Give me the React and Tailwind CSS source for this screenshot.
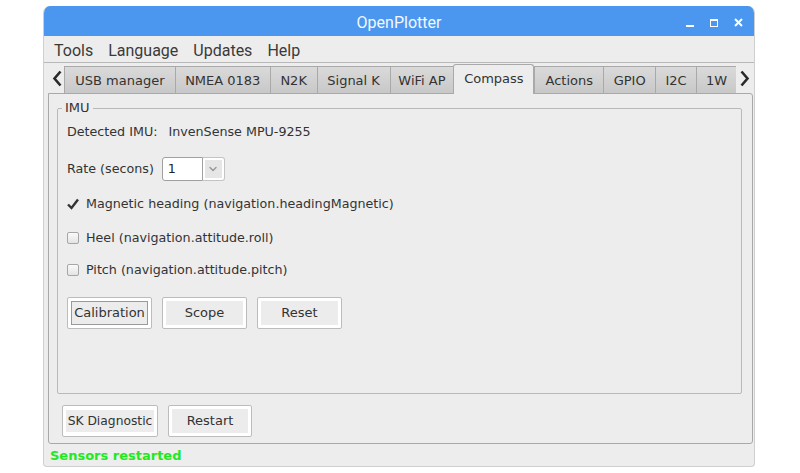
import { ChevronDown } from 'lucide-react'

const TABS = [
  { label: 'USB manager', w: 'w-[111px]' },
  { label: 'NMEA 0183', w: 'w-[95px]' },
  { label: 'N2K', w: 'w-[47px]' },
  { label: 'Signal K', w: 'w-[73px]' },
  { label: 'WiFi AP', w: 'w-[64px]' },
  { label: 'Compass', w: 'w-[81px]', active: true },
  { label: 'Actions', w: 'w-[69px]' },
  { label: 'GPIO', w: 'w-[52px]' },
  { label: 'I2C', w: 'w-[41px]' },
  { label: '1W', w: 'w-[40px]' },
]

function GtkButton({ children, width, focused }) {
  return (
    <div className={`${width} h-[32px] border border-[#bcbcbc] bg-white rounded-[2px] p-[3px] flex`}>
      <div
        className={`flex-1 flex items-center justify-center bg-[#ececec] text-[#333] ${
          focused ? 'border border-[#9a9a9a] outline outline-1 outline-white' : ''
        }`}
      >
        {children}
      </div>
    </div>
  )
}

function CheckRow({ checked, children }) {
  return (
    <div className="flex items-center h-[16px]">
      {checked ? (
        <svg width="12" height="12" viewBox="0 0 12 12" className="mr-[7px]">
          <path d="M1 6.5 L4.5 10 L11 1.5" fill="none" stroke="#333" strokeWidth="2.4" />
        </svg>
      ) : (
        <div className="w-[12px] h-[12px] mr-[7px] rounded-[2px] border border-[#a6a6a6] bg-gradient-to-b from-[#fafafa] to-[#e4e4e4]" />
      )}
      <span>{children}</span>
    </div>
  )
}

export default function App() {
  return (
    <div className="w-[800px] h-[473px] bg-white pt-[6px] pl-[43px] font-['DejaVu_Sans',sans-serif] text-[13px] text-[#333]">
      <div className="w-[712px] h-[461px] flex flex-col bg-[#ededed] rounded-t-[7px] rounded-b-[4px] border-x border-b border-[#cfcfcf] overflow-hidden">
        {/* title bar */}
        <div className="h-[30px] bg-[#4b97ef] relative flex items-center justify-center pt-[3px]">
          <span className="font-['Roboto',sans-serif] text-[16px] text-[#f4f8ff]">OpenPlotter</span>
          <div className="absolute right-[11px] top-[3px] bottom-0 flex items-center gap-[16px]">
            <div className="w-[8px] h-[8px] flex items-end">
              <div className="w-[8px] h-[2px] bg-white" />
            </div>
            <div className="w-[8px] h-[8px] border border-white border-t-2" />
            <svg width="9" height="9" viewBox="0 0 9 9">
              <path d="M1 1 L8 8 M8 1 L1 8" stroke="white" strokeWidth="2" />
            </svg>
          </div>
        </div>

        {/* menu bar */}
        <div className="h-[27px] flex items-center gap-[15px] pl-[10px] pt-[3px] border-b border-[#b8b8b8] font-['Roboto',sans-serif] text-[16px] text-[#3a3a3a]">
          <span>Tools</span>
          <span>Language</span>
          <span>Updates</span>
          <span>Help</span>
        </div>

        {/* notebook */}
        <div className="pl-[4px] pr-[2px]">
          <div className="h-[30px] flex items-end relative">
            <div className="w-[16px] h-[29px] flex items-center justify-center">
              <svg width="10" height="17" viewBox="0 0 10 17" className="ml-[2px]">
                <path d="M8.5 1.5 L2.5 8.5 L8.5 15.5" fill="none" stroke="#2a2a2a" strokeWidth="2.6" />
              </svg>
            </div>
            {TABS.map((t) =>
              t.active ? (
                <div
                  key={t.label}
                  className={`${t.w} h-[30px] -mb-[1px] relative z-10 flex items-center justify-center bg-[#ededed] border border-b-0 border-[#a9a9a9] rounded-t-[3px] pb-[2px]`}
                >
                  {t.label}
                </div>
              ) : (
                <div
                  key={t.label}
                  className={`${t.w} h-[27px] flex items-center justify-center pt-[1px] bg-gradient-to-b from-[#dadada] to-[#c8c8c8] border-t border-l border-[#a9a9a9] last:border-r last:rounded-tr-[3px] first:rounded-tl-[3px] text-[#333]`}
                >
                  {t.label}
                </div>
              )
            )}
            <div className="w-[16px] h-[29px] flex items-center justify-center">
              <svg width="10" height="17" viewBox="0 0 10 17" className="ml-[2px]">
                <path d="M1.5 1.5 L7.5 8.5 L1.5 15.5" fill="none" stroke="#2a2a2a" strokeWidth="2.6" />
              </svg>
            </div>
          </div>

          {/* tab panel */}
          <div className="w-[705px] h-[351px] border border-[#a9a9a9] rounded-b-[3px] rounded-tr-[3px] flex flex-col">
            <div className="mt-[14px] ml-[8px] w-[685px] h-[286px] border border-[#b9b9b9] rounded-[2px] relative">
              <span className="absolute -top-[9px] left-[4px] px-[3px] bg-[#ededed] leading-[16px]">IMU</span>
              <div className="pl-[9px] pt-[15px] flex flex-col text-[12.7px]">
                <div className="flex items-center h-[16px]">
                  <span>Detected IMU:</span>
                  <span className="ml-[11px]">InvenSense MPU-9255</span>
                </div>

                <div className="flex items-center mt-[17px] h-[24px]">
                  <span>Rate (secons)</span>
                  <div className="ml-[8px] flex h-[24px]">
                    <div className="w-[41px] h-[24px] bg-white border border-[#a0a0a0] rounded-l-[3px] flex items-center pl-[5px] text-[#222]">
                      1
                    </div>
                    <div className="w-[22px] h-[24px] bg-white border border-l-0 border-[#c4c4c4] rounded-r-[3px] p-[2px]">
                      <div className="w-full h-full bg-[#e6e6e6] flex items-center justify-center">
                        <ChevronDown size={12} strokeWidth={3} className="text-[#9a9a9a]" />
                      </div>
                    </div>
                  </div>
                </div>

                <div className="mt-[15px]">
                  <CheckRow checked>Magnetic heading (navigation.headingMagnetic)</CheckRow>
                </div>
                <div className="mt-[18px]">
                  <CheckRow>Heel (navigation.attitude.roll)</CheckRow>
                </div>
                <div className="mt-[16px]">
                  <CheckRow>Pitch (navigation.attitude.pitch)</CheckRow>
                </div>

                <div className="mt-[19px] flex gap-[10px] text-[13px]">
                  <GtkButton width="w-[85px]" focused>Calibration</GtkButton>
                  <GtkButton width="w-[85px]">Scope</GtkButton>
                  <GtkButton width="w-[85px]">Reset</GtkButton>
                </div>
              </div>
            </div>

            <div className="mt-[11px] ml-[13px] flex gap-[10px]">
              <div className="w-[96px] h-[32px] border border-[#bcbcbc] bg-white rounded-[2px] py-[4px] px-[3px] flex">
                <div className="flex-1 flex items-center justify-center bg-[#ececec] whitespace-nowrap text-[12.3px]">
                  SK Diagnostic
                </div>
              </div>
              <GtkButton width="w-[84px]">Restart</GtkButton>
            </div>
          </div>
        </div>

        {/* status bar */}
        <div className="flex-1 flex items-center pl-[6px] pt-[2px]">
          <span className="font-bold text-[#22e822]">Sensors restarted</span>
        </div>
      </div>
    </div>
  )
}
